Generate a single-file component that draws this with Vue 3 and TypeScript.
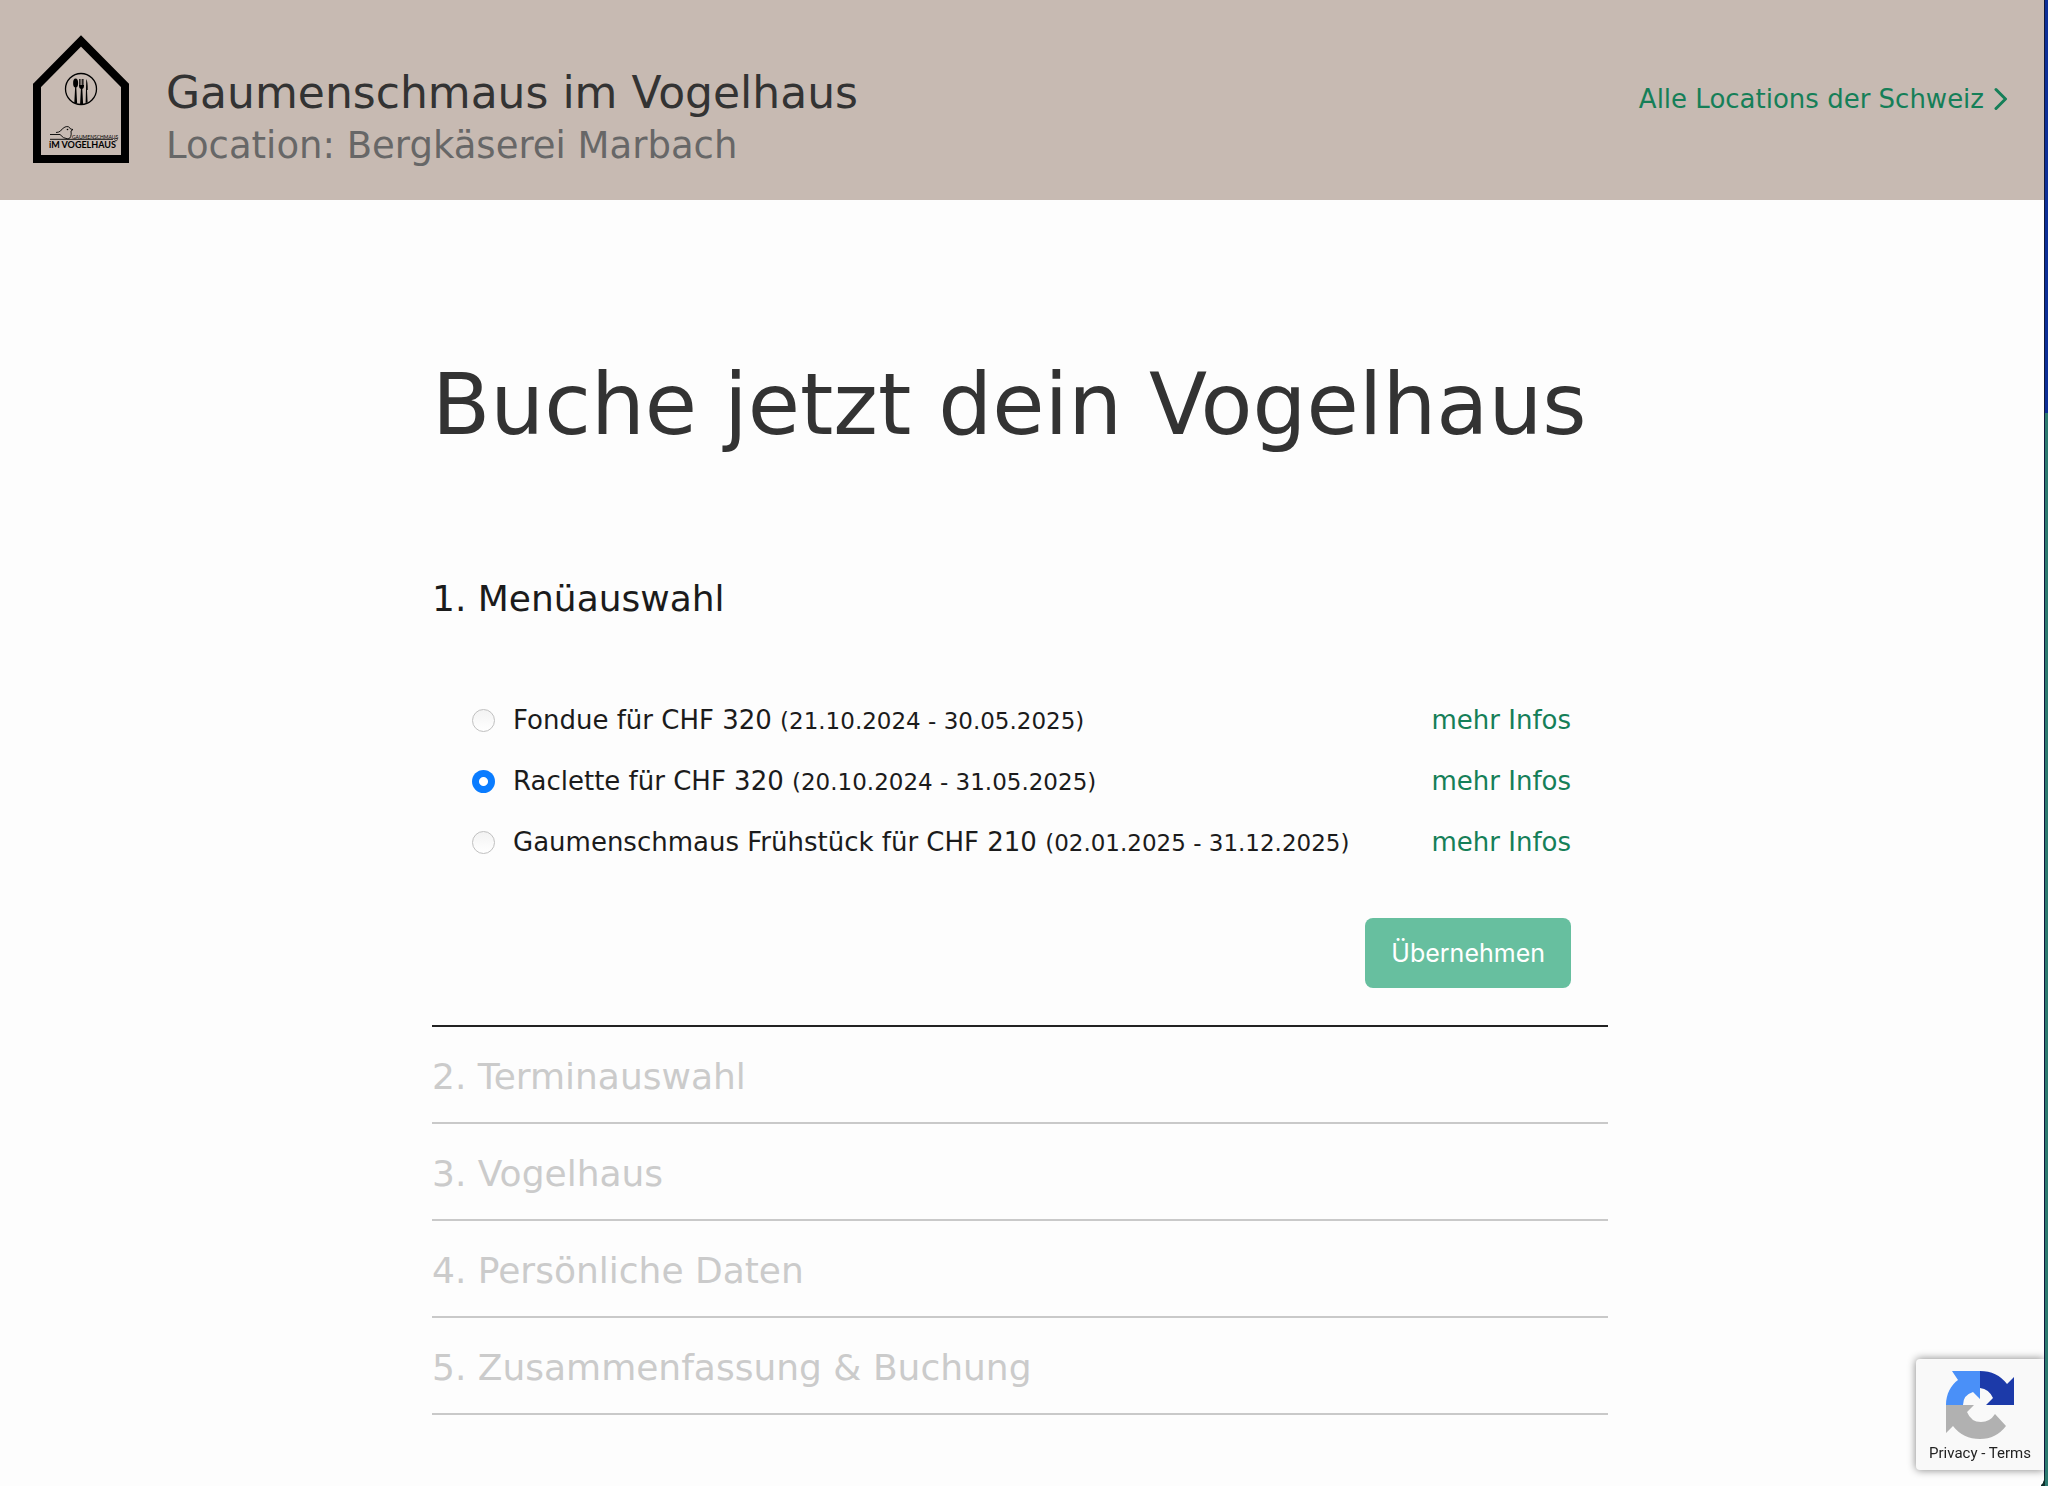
<script setup lang="ts">
import { ref } from 'vue'

interface Menu {
  id: string
  title: string
  period: string
}

const menus: Menu[] = [
  { id: 'fondue', title: 'Fondue für CHF 320', period: '(21.10.2024 - 30.05.2025)' },
  { id: 'raclette', title: 'Raclette für CHF 320', period: '(20.10.2024 - 31.05.2025)' },
  { id: 'fruehstueck', title: 'Gaumenschmaus Frühstück für CHF 210', period: '(02.01.2025 - 31.12.2025)' },
]

const upcomingSteps: string[] = [
  '2. Terminauswahl',
  '3. Vogelhaus',
  '4. Persönliche Daten',
  '5. Zusammenfassung & Buchung',
]

const selected = ref<string>('raclette')
</script>

<template>
  <div class="page">
    <header class="topbar">
      <div class="brand">
        <svg class="logo" viewBox="0 0 96 128" role="img" aria-label="Gaumenschmaus im Vogelhaus">
          <path d="M4 50.500 48 6 92 50.500V124H4Z" fill="none" stroke="#000" stroke-width="8" />
          <circle cx="48" cy="54" r="15.500" fill="none" stroke="#000" stroke-width="1.300" />
          <ellipse cx="42.600" cy="48" rx="2.500" ry="4.500" />
          <path d="M42.200 51h1l.9 17h-2.800zM46 44h.8v6h.7v-6h.8v6h.7v-6h.8v6h.7v-6h.5v7q0 2.500-1.700 3l.8 15h-3l.8-15q-1.900-.5-1.900-3zM53.300 44q1.600 3 1.400 11h-.7l.6 12.500-2 .5z" />
          <path d="M17 99.500h10q3 4 8 4.500q4-1 3-8l2-1.500-2.500-.5q-1.500-3.500-5.500-2-3 1.500-4.500 4-2 1.500-4.500 1.500M17 104.300h63" fill="none" stroke="#000" stroke-width=".9" />
          <circle cx="34.500" cy="94.500" r=".8" />
          <text x="39" y="103.500" font-size="5">GAUMENSCHMAUS</text>
          <text class="logo-name" x="16" y="112.500" font-size="9">iM VOGELHAUS</text>
          <circle cx="83" cy="104.500" r="1.300" fill="none" stroke="#000" stroke-width=".6" />
        </svg>
        <div class="titles">
          <p class="site-title">Gaumenschmaus im Vogelhaus</p>
          <p class="site-location">Location: Bergkäserei Marbach</p>
        </div>
      </div>
      <a class="all-locations" href="#locations">
        Alle Locations der Schweiz
        <svg class="chevron" viewBox="0 0 14 24" aria-hidden="true">
          <path d="M2 2.500 11.500 12 2 21.500" fill="none" stroke="currentColor" stroke-width="3" stroke-linecap="round" stroke-linejoin="round" />
        </svg>
      </a>
    </header>

    <main>
      <div class="booking">
        <h1>Buche jetzt dein Vogelhaus</h1>

        <section class="step-active">
          <h2>1. Menüauswahl</h2>
          <form class="menu-form" @submit.prevent>
            <div v-for="menu in menus" :key="menu.id" class="menu-row">
              <input :id="menu.id" v-model="selected" type="radio" name="menu" :value="menu.id" />
              <label :for="menu.id">{{ menu.title }} <small>{{ menu.period }}</small></label>
              <a href="#infos">mehr Infos</a>
            </div>
            <button type="submit">Übernehmen</button>
          </form>
        </section>

        <section v-for="step in upcomingSteps" :key="step" class="step-upcoming">
          <h2>{{ step }}</h2>
        </section>
      </div>
    </main>

    <aside class="captcha">
      <svg class="captcha-logo" viewBox="0 0 68 68" aria-hidden="true">
        <path d="M0 34C0 23 5 14 12 9L6 0H34V28L27 21Q17 24 17 34Z" fill="#4a90f8" />
        <path d="M34 0Q51 0 61 13L68 6V34H40L47 27Q43 18 34 17Z" fill="#1c3aa9" />
        <path d="M0 34H28L21 41Q25 51 35 51 44 51 49 43L60 55Q50 68 34 68 17 68 7 55L0 62Z" fill="#b1b1b1" />
      </svg>
      <p class="captcha-links"><a href="#privacy">Privacy</a><span> - </span><a href="#terms">Terms</a></p>
    </aside>
    <div class="window-edge" aria-hidden="true"></div>
  </div>
</template>

<style>
body {
  margin: 0;
  background: #fdfdfd;
}
</style>

<style scoped>
.page {
  min-height: 100vh;
  box-sizing: border-box;
  padding-right: 4px;
  font-family: Verdana, "DejaVu Sans", sans-serif;
  font-size: 26px;
  color: #1b1b1b;
}

p,
h1,
h2 {
  margin: 0;
  font-weight: 400;
}

a {
  color: #157f58;
  text-decoration: none;
}

.topbar {
  display: flex;
  justify-content: space-between;
  align-items: flex-start;
  padding: 35px 36px 28px 33px;
  background: #c7bab2;
}

.brand {
  display: flex;
  gap: 37px;
}

.logo {
  width: 96px;
  height: 128px;
  font-family: Lato, sans-serif;
}

.logo-name {
  font-weight: 700;
}

.titles {
  padding-top: 32px;
}

.site-title {
  font-size: 44px;
  line-height: 52px;
  color: #333;
}

.site-location {
  font-size: 37px;
  line-height: 53px;
  color: #676767;
}

.all-locations {
  display: flex;
  align-items: center;
  gap: 10px;
  padding-top: 48px;
  line-height: 32px;
}

.chevron {
  width: 14px;
  height: 24px;
}

main {
  padding: 151px 4px 70px 0;
}

.booking {
  width: 60%;
  max-width: 1176px;
  margin: 0 auto;
}

h1 {
  font-size: 85px;
  line-height: 108px;
  white-space: nowrap;
  color: #333;
}

h2 {
  font-size: 36px;
  line-height: 47px;
}

.step-active {
  padding-top: 116px;
  border-bottom: 2px solid #222;
}

.menu-form {
  display: flex;
  flex-direction: column;
  padding: 67px 37px 37px 40px;
}

.menu-row {
  display: flex;
  align-items: center;
  height: 61px;
}

.menu-row input {
  appearance: none;
  box-sizing: border-box;
  width: 23px;
  height: 23px;
  margin: 2px 18px 0 0;
  border: 1px solid #c0c0c0;
  border-radius: 50%;
  background: linear-gradient(#f3f3f3, #fff);
}

.menu-row input:checked {
  border: 0;
  background: radial-gradient(circle, #fff 4px, #0a7cff 5px);
}

.menu-row label {
  flex: 1;
}

small {
  font-size: 23px;
}

button {
  align-self: flex-end;
  height: 70px;
  margin-top: 46px;
  padding: 0 26px;
  border: 0;
  border-radius: 8px;
  background: #67bf9f;
  color: #fff;
  font-family: Inter, sans-serif;
  font-size: 25px;
}

.step-upcoming {
  padding: 26px 0 22px;
  border-bottom: 2px solid #c9c9c9;
  color: #cbcbcb;
}

.captcha {
  position: fixed;
  right: 4px;
  bottom: 16px;
  display: flex;
  flex-direction: column;
  align-items: center;
  box-sizing: border-box;
  width: 128px;
  height: 111px;
  padding-top: 12px;
  border-radius: 4px 0 0 4px;
  background: #f9f9f9;
  box-shadow: 0 0 8px #808080;
  font-family: Roboto, sans-serif;
  font-size: 15px;
  line-height: 20px;
}

.captcha-logo {
  width: 68px;
  height: 68px;
}

.captcha-links {
  padding-top: 4px;
  white-space: pre;
}

.captcha-links a {
  color: #222;
}

.window-edge {
  position: fixed;
  top: 0;
  right: 0;
  bottom: 0;
  box-sizing: border-box;
  width: 4px;
  border-left: 1px solid #10183c;
  background: linear-gradient(#0d2f96 413px, #2c7a70 413px);
}

/* rounded lower corner of the window */
.window-edge::before {
  content: "";
  position: absolute;
  right: 3px;
  bottom: 0;
  width: 4px;
  height: 14px;
  background: radial-gradient(ellipse 4px 14px at 0 0, transparent 85%, #10302c 95%);
}
</style>
